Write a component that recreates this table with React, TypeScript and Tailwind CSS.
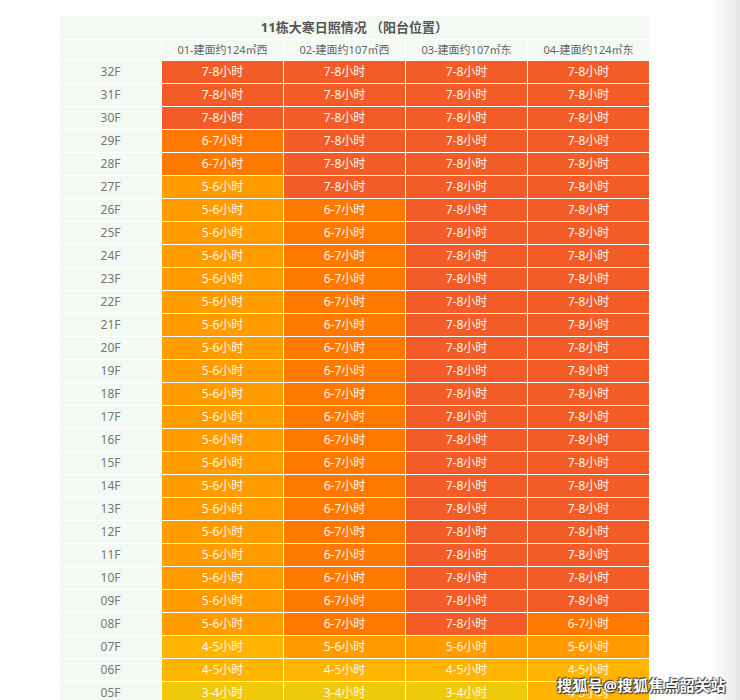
import React from 'react';

type Level = '7-8' | '6-7' | '5-6' | '4-5' | '3-4';

const levelColor: Record<Level, string> = {
  '7-8': 'bg-[#f35c26]',
  '6-7': 'bg-[#ff7800]',
  '5-6': 'bg-[#ff9c00]',
  '4-5': 'bg-[#ffb500]',
  '3-4': 'bg-[#f0c90a]',
};

const columns = ['01-建面约124㎡西', '02-建面约107㎡西', '03-建面约107㎡东', '04-建面约124㎡东'];

function levelFor(col: number, floor: number): Level {
  if (floor === 5) return col === 3 ? '4-5' : '3-4';
  if (floor === 6) return '4-5';
  if (floor === 7) return col === 0 ? '4-5' : '5-6';
  if (col === 0) return floor >= 30 ? '7-8' : floor >= 28 ? '6-7' : '5-6';
  if (col === 1) return floor >= 27 ? '7-8' : '6-7';
  if (col === 2) return '7-8';
  return floor >= 9 ? '7-8' : '6-7';
}

const floors = Array.from({ length: 28 }, (_, i) => 32 - i);

export default function App() {
  return (
    <div
      className="relative flex h-[700px] w-[740px] overflow-hidden bg-white"
      style={{ fontFamily: '"Noto Sans", "Noto Sans CJK SC", sans-serif' }}
    >
      <div className="flex-1 pl-[60px] pt-[16px]">
        <div className="grid w-[589px] grid-cols-[101px_repeat(4,121px)] gap-px bg-white">
          <div className="col-span-5 flex h-[23px] items-center justify-center bg-[#f5f9f3] text-[13px] font-bold text-[#555]">
            11栋大寒日照情况 （阳台位置）
          </div>
          <div className="h-[20px] bg-[#f5f9f3]" />
          {columns.map((c) => (
            <div key={c} className="flex h-[20px] items-center justify-center bg-[#f5f9f3] text-[11px] text-[#666]">
              {c}
            </div>
          ))}
          {floors.map((f) => (
            <React.Fragment key={f}>
              <div className="flex h-[22px] items-center justify-center bg-[#f5f9f3] text-[12px] text-[#777]">
                {String(f).padStart(2, '0')}F
              </div>
              {columns.map((_, ci) => {
                const lv = levelFor(ci, f);
                return (
                  <div
                    key={ci}
                    className={`flex h-[22px] items-center justify-center text-[12px] text-[#fff8ec] ${levelColor[lv]}`}
                  >
                    {lv}小时
                  </div>
                );
              })}
            </React.Fragment>
          ))}
        </div>
      </div>
      <div className="w-[28px] bg-gradient-to-r from-white to-[#e6e6e6]" />
      <div
        className="absolute bottom-[4px] right-[14px] text-[15px] font-bold tracking-[0.5px] text-white"
        style={{ textShadow: '0 0 2px #333, 1px 1px 1px #222, -1px -1px 1px #444' }}
      >
        搜狐号@搜狐焦点韶关站
      </div>
    </div>
  );
}
